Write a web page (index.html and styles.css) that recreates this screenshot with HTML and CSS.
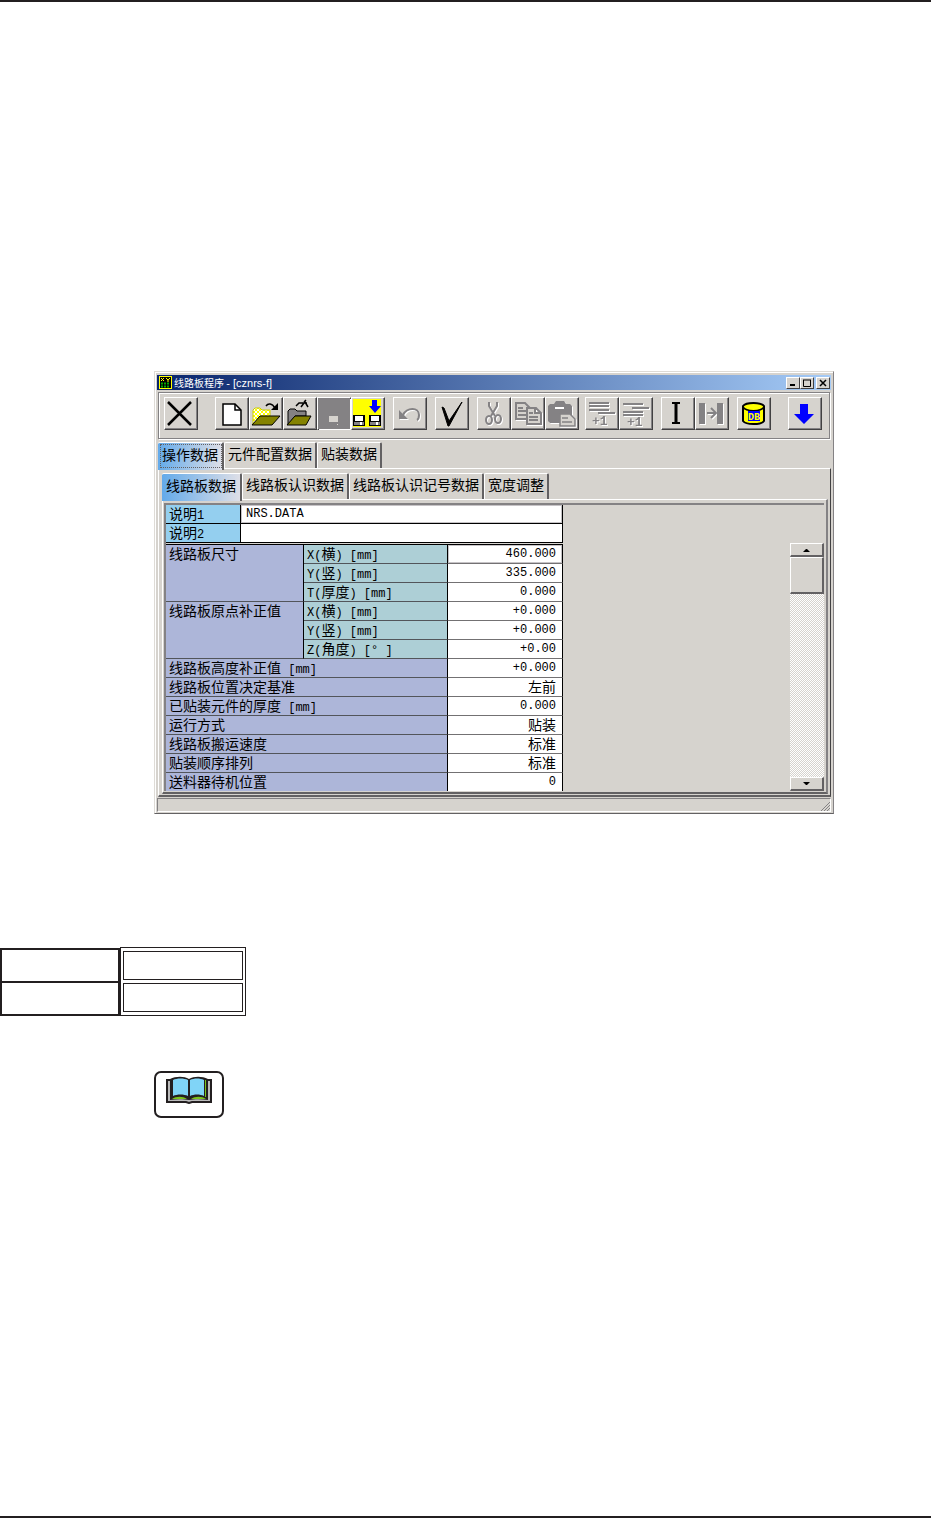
FILE: index.html
```html
<!DOCTYPE html>
<html lang="zh-CN">
<head>
    <meta charset="UTF-8">
    <meta name="viewport" content="width=device-width, initial-scale=1.0">
    <title>线路板程序</title>
    <link rel="stylesheet" href="styles.css">
</head>
<body>
    <main>
        <section class="window">
            <header class="titlebar">
                <svg class="app-icon" width="13" height="13" viewBox="0 0 13 13">
                    <rect width="13" height="13" fill="#ff0"/>
                    <rect x="1" y="1" width="11" height="11" fill="#000"/>
                    <path d="M2 2l3 3M5 2L2 5M7 2l2 2 2-2M9 4v2" stroke="#ff0" fill="none"/>
                    <path d="M2 7.500h9M2 10.500h9" stroke="#0a0" stroke-width="2" stroke-dasharray="2 1"/>
                </svg>
                <h1>线路板程序 <span>- [cznrs-f]</span></h1>
                <div class="window-buttons">
                    <button aria-label="最小化"><svg width="10" height="8"><path d="M2 6h5" stroke="#000" stroke-width="2"/></svg></button>
                    <button aria-label="最大化"><svg width="10" height="8"><path d="M1.500 1v6.500h7V1M1 1h8" stroke="#000" fill="none"/></svg></button>
                    <button class="close" aria-label="关闭"><svg width="10" height="8"><path d="M2 1l6 6M8 1L2 7" stroke="#000" stroke-width="1.500"/></svg></button>
                </div>
            </header>

            <div class="toolbar">
                <div class="group">
                    <button aria-label="退出"><svg viewBox="0 0 34 33"><path d="M4 5l23 23M27 5L4 28" stroke="#000" stroke-width="2.500"/></svg></button>
                </div>
                <div class="group wide">
                    <button aria-label="新建"><svg viewBox="0 0 34 33"><path d="M8 7h12l6 6v15H8z" fill="#fff" stroke="#000" stroke-width="1.500"/><path d="M20 7v6h6" fill="none" stroke="#000" stroke-width="1.500"/></svg></button>
                    <button aria-label="打开"><svg viewBox="0 0 34 33">
                        <defs><pattern id="dots" width="4" height="4" patternUnits="userSpaceOnUse"><rect width="4" height="4" fill="#ff0"/><path d="M0 0h2v2H0zM2 2h2v2H2z" fill="#fff"/></pattern></defs>
                        <path d="M4 28V13l2-2h5l2 2h8v6H11z" fill="url(#dots)" stroke="#cc0"/>
                        <path d="M3 28l8-9h20l-8 9z" fill="#848200" stroke="#000"/>
                        <path d="M17 9c2-3 6-3 9 2" fill="none" stroke="#000" stroke-width="1.500"/><path d="M29 6v7h-7z"/>
                    </svg></button>
                    <button aria-label="读取"><svg viewBox="0 0 34 33">
                        <path d="M5 28V14l2-2h5l2 2h9v5H12z" fill="#848284" stroke="#000"/>
                        <path d="M4 28l8-9h16l-5 9z" fill="#848200" stroke="#000"/>
                        <path d="M13 9l3-3h8M18 10l3-4M22 5l3 5M21 5l2-2" fill="none" stroke="#000" stroke-width="1.500"/>
                    </svg></button>
                    <button aria-label="保存" disabled class="filled"><svg viewBox="0 0 34 33"><path d="M0 0h32v31H0z" fill="#848284"/><path d="M11 18h9v6h-9zM19 26h1v1h-1z" fill="#d6d3ce"/></svg></button>
                    <button aria-label="另存为"><svg viewBox="0 0 34 33">
                        <path d="M2 2h28v28H2z" fill="#ff0"/>
                        <path d="M21 3h5v6h4l-6 7-6-7h3z" fill="#00f"/>
                        <path d="M2 18h12v11H2zM18 18h12v11H18z"/>
                        <path d="M4 19h8v5H4zM20 19h8v5h-8z" fill="#fff"/>
                        <path d="M3 25h10v3H3zM19 25h10v3H19z" fill="#848284"/>
                        <path d="M9 25h2v3H9zM25 25h2v3h-2z" fill="#fff"/>
                    </svg></button>
                </div>
                <div class="group">
                    <button aria-label="撤销" disabled><svg viewBox="0 0 34 33"><path d="M6 13v9h9z" fill="#848284"/><path d="M10 18c4-8 16-8 16 0 0 2 0 4-2 5" fill="none" stroke="#848284" stroke-width="2"/></svg></button>
                </div>
                <div class="group">
                    <button aria-label="检查"><svg viewBox="0 0 34 33"><path d="M7 10l2 1 5 13L27 5 14 29h-1z" stroke="#000"/></svg></button>
                </div>
                <div class="group">
                    <button aria-label="剪切" disabled><svg viewBox="0 0 34 33"><g fill="none" stroke="#848284" stroke-width="2"><path d="M12 5v4l6 10M20 5v4l-6 10"/><ellipse cx="12" cy="23" rx="3" ry="4"/><ellipse cx="21" cy="22" rx="3" ry="4"/></g></svg></button>
                    <button aria-label="复制" disabled><svg viewBox="0 0 34 33"><g fill="#d6d3ce" stroke="#848284" stroke-width="2"><path d="M5 6h9l5 5v11H5zM7 11h5M7 14h8M7 18h8"/><path d="M16 11h9l5 5v11H16zM24 11v5h5M18 16h4M18 20h9M18 23h9"/></g></svg></button>
                    <button aria-label="粘贴" disabled><svg viewBox="0 0 34 33"><path d="M3 9l2-2h4l2-3h8l2 3h4l2 2v17H5l-2-2z" fill="#848284"/><path d="M10 11h9" stroke="#fff" stroke-width="2"/><path d="M15 17h10l5 5v7H15zM17 21h6M17 25h10" fill="#d6d3ce" stroke="#848284" stroke-width="1.500"/></svg></button>
                </div>
                <div class="group tight">
                    <button aria-label="插入" disabled><svg viewBox="0 0 34 33"><path d="M4 6h20M4 9h20M4 13h20M13 16h17" stroke="#848284" stroke-width="2"/><text x="7" y="28">+1</text></svg></button>
                    <button aria-label="追加" disabled><svg viewBox="0 0 34 33"><path d="M4 7h20M13 11h17M4 15h20M4 18h20" stroke="#848284" stroke-width="2"/><text x="8" y="29">+1</text></svg></button>
                </div>
                <div class="group">
                    <button aria-label="光标"><svg viewBox="0 0 34 33"><path d="M11 6h8M11 26h8" stroke="#000" stroke-width="2"/><path d="M15 6v20" stroke="#000" stroke-width="3"/></svg></button>
                    <button aria-label="移动" disabled><svg viewBox="0 0 34 33"><path d="M4 6h6v21H4zM22 6h6v21h-6z" fill="#848284"/><path d="M12 16h9M16 11l5 5-5 5" fill="none" stroke="#848284" stroke-width="2"/></svg></button>
                </div>
                <div class="group">
                    <button aria-label="数据库"><svg viewBox="0 0 34 33"><path d="M6 9v15c3 4 18 4 21 0V9c-3-4-18-4-21 0z" fill="#ff0" stroke="#000" stroke-width="2"/><path d="M6 10c3 5 18 5 21 0" fill="none" stroke="#000" stroke-width="1.500"/><path d="M11 14h12v10H11z" fill="#00f"/><text class="db" x="11" y="23">DB</text></svg></button>
                </div>
                <div class="group wide">
                    <button aria-label="下载"><svg viewBox="0 0 34 33"><path d="M12 7h8v10h6L16 27 6 17h6z" fill="#00f"/></svg></button>
                </div>
            </div>

            <nav class="tabs">
                <button class="tab active focused">操作数据</button>
                <button class="tab">元件配置数据</button>
                <button class="tab">贴装数据</button>
            </nav>

            <div class="panel">
                <nav class="tabs">
                    <button class="tab active">线路板数据</button>
                    <button class="tab">线路板认识数据</button>
                    <button class="tab">线路板认识记号数据</button>
                    <button class="tab">宽度调整</button>
                </nav>

                <div class="panel inner">
                    <div class="grid">
                        <div class="tables">
                            <table class="notes">
                                <tr>
                                    <th><label for="note1">说明<span>1</span></label></th>
                                    <td><input type="text" id="note1" class="current" value="NRS.DATA"></td>
                                </tr>
                                <tr>
                                    <th><label for="note2">说明<span>2</span></label></th>
                                    <td><input type="text" id="note2"></td>
                                </tr>
                            </table>
                            <table class="params">
                                <tr><th rowspan="3" class="name">线路板尺寸</th><th class="axis"><label for="sizeX"><span>X(</span>横<span>) [mm]</span></label></th><td><input type="text" id="sizeX" class="current" value="460.000"></td></tr>
                                <tr><th class="axis"><span>Y(</span>竖<span>) [mm]</span></th><td>335.000</td></tr>
                                <tr><th class="axis"><span>T(</span>厚度<span>) [mm]</span></th><td>0.000</td></tr>
                                <tr><th rowspan="3" class="name">线路板原点补正值</th><th class="axis"><span>X(</span>横<span>) [mm]</span></th><td>+0.000</td></tr>
                                <tr><th class="axis"><span>Y(</span>竖<span>) [mm]</span></th><td>+0.000</td></tr>
                                <tr><th class="axis"><span>Z(</span>角度<span>) [° ]</span></th><td>+0.00</td></tr>
                                <tr><th colspan="2">线路板高度补正值<span> [mm]</span></th><td>+0.000</td></tr>
                                <tr><th colspan="2">线路板位置决定基准</th><td class="word">左前</td></tr>
                                <tr><th colspan="2">已贴装元件的厚度<span> [mm]</span></th><td>0.000</td></tr>
                                <tr><th colspan="2">运行方式</th><td class="word">贴装</td></tr>
                                <tr><th colspan="2">线路板搬运速度</th><td class="word">标准</td></tr>
                                <tr><th colspan="2">贴装顺序排列</th><td class="word">标准</td></tr>
                                <tr><th colspan="2">送料器待机位置</th><td>0</td></tr>
                            </table>
                        </div>
                        <div class="scrollbar">
                            <button aria-label="向上"><svg width="8" height="4"><path d="M0 4l3-3h1l3 3z"/></svg></button>
                            <div class="thumb"></div>
                            <div class="track"></div>
                            <button aria-label="向下"><svg width="8" height="4"><path d="M0 0l3 3h1l3-3z"/></svg></button>
                        </div>
                    </div>
                </div>
            </div>

            <footer class="statusbar">
                <svg width="9" height="9" viewBox="0 0 9 9"><path d="M0 9l9-9M3 9l6-6M6 9l3-3" stroke="#848284" fill="none"/></svg>
            </footer>
        </section>

        <div class="boxes">
            <table class="plain-box">
                <tr><td></td></tr>
                <tr><td></td></tr>
            </table>
            <table class="double-box">
                <tr><td></td></tr>
                <tr><td></td></tr>
            </table>
        </div>

        <div class="reference">
            <svg width="46" height="28" viewBox="0 0 46 28">
                <path d="M1 4h44v22H26l-3 1-3-1H1z" fill="#bbb" stroke="#231f20" stroke-width="2"/>
                <path d="M4 3c6-3 14-3 19 0 5-3 13-3 19 0v21c-6-1-14-1-19 0-5-1-13-1-19 0z" fill="#231f20"/>
                <path d="M6 23c4-3 11-3 15 0zM25 23c4-3 11-3 15 0zM39 4h1v17h-1z" fill="#7ac31c"/>
                <path d="M7 4c4-2 11-2 15 0v16c-4-2-11-2-15 0zM24 4c4-2 10-2 14 0v16c-4-2-10-2-14 0z" fill="#80d4f7"/>
            </svg>
        </div>
    </main>
</body>
</html>
```

FILE: styles.css
```css
* {
    box-sizing: border-box;
}
body {
    margin: 0;
    min-height: 100vh;
    background: #fff;
    border-top: 2px solid #231f20;
    border-bottom: 2px solid #231f20;
    color: #000;
    font-family: "Noto Sans CJK SC", sans-serif;
    font-size: 14px;
}
button {
    margin: 0;
    padding: 0;
    font: inherit;
    color: inherit;
    background: #d6d3ce;
    border: 0;
}
svg {
    display: block;
}

/* Window frame */
.window {
    margin: 369px 97px 0 154px;
    padding: 3px 2px 1px;
    background: #d6d3ce;
    border: 1px solid #dedbd6;
    border-right-color: #848284;
    border-bottom-color: #636163;
    box-shadow: inset 1px 1px 0 #fff;
}
.titlebar {
    display: flex;
    align-items: center;
    height: 15px;
    padding: 0 1px 0 2px;
    background: linear-gradient(to right, #08246b, #a5cbf7);
}
.titlebar h1 {
    flex: 1;
    margin: 0 0 0 2px;
    color: #fff;
    font-size: 10px;
    line-height: 15px;
    font-weight: normal;
}
.titlebar h1 span {
    font-family: "Liberation Sans", sans-serif;
    font-size: 11px;
}
.window-buttons {
    display: flex;
}
.window-buttons button {
    display: flex;
    align-items: center;
    justify-content: center;
    width: 14px;
    height: 12px;
    border: 1px solid;
    border-color: #fff #424142 #424142 #fff;
}
.window-buttons .close {
    margin-left: 2px;
}

/* Toolbar */
.toolbar {
    display: flex;
    margin: 2px 1px 0;
    padding: 4px 5px 8px;
    border: 1px solid #848284;
    box-shadow: inset 1px 1px 0 #fff, 1px 1px 0 #fff;
}
.group {
    display: flex;
    margin-left: 8px;
}
.group:first-child {
    margin-left: 0;
}
.group.wide {
    margin-left: 17px;
}
.group.tight {
    margin-left: 6px;
}
.group button {
    width: 34px;
    height: 33px;
    border: 1px solid;
    border-color: #fff #424142 #424142 #fff;
    box-shadow: inset -1px -1px 0 #848284;
}
.group svg {
    width: 34px;
    height: 33px;
    margin: -1px;
}
.group button:disabled svg {
    filter: drop-shadow(1px 1px 0 #fff);
}
.group .filled svg {
    margin: 0;
}
.group text {
    font: bold 13px "Liberation Mono", monospace;
    fill: #848284;
}
.group text.db {
    font: bold 10px "Liberation Mono", monospace;
    fill: #ff0;
}

/* Tabs */
.tabs {
    display: flex;
    height: 26px;
    margin: 3px 0 0 1px;
}
.tab {
    height: 26px;
    padding: 0 3px 5px;
    line-height: 20px;
    border: solid;
    border-width: 1px 2px 0 1px;
    border-color: #fff #636163 #fff #fff;
    border-radius: 2px 2px 0 0;
}
.tab.active {
    position: relative;
    height: 28px;
    padding: 0 4px 6px;
    border-left: 0;
    background: linear-gradient(to right, #63aaea, #dedfe7);
}
.tab.focused {
    outline: 1px dotted #636163;
    outline-offset: -3px;
}

/* Tab panels */
.panel {
    margin-left: 1px;
    padding: 4px 2px 1px;
    border: solid;
    border-width: 1px 1px 2px;
    border-color: #fff #424142 #636163 #fff;
}
.panel .tabs {
    margin-top: 0;
}
.panel.inner {
    padding: 3px 2px 1px 1px;
    border-right: 2px solid #848284;
}
.grid {
    display: flex;
    justify-content: space-between;
    border-top: 2px solid #848284;
    border-left: 2px solid #848284;
}

/* Data tables */
.tables table {
    border-collapse: separate;
    border-spacing: 0;
    table-layout: fixed;
    width: 397px;
}
.tables th,
.tables td {
    height: 19px;
    padding: 0 3px;
    line-height: 18px;
    font-weight: normal;
    text-align: left;
    vertical-align: top;
    white-space: nowrap;
    border-right: 1px solid #000;
    border-bottom: 1px solid #000;
}
.tables th,
.tables .word {
    line-height: 16px;
}
.tables th span,
.tables td,
.tables input {
    font-family: "Liberation Mono", monospace;
    font-size: 12px;
}
.tables span {
    line-height: 12px;
    white-space: pre;
}
.tables td {
    background: #fff;
}
.tables input {
    display: block;
    width: 100%;
    height: 18px;
    margin: 0;
    padding: 0 4px;
    color: #000;
    background: #fff;
    border: 1px solid #fff;
    outline: 0;
}
.tables input.current {
    border-color: #c6c3c6;
}
.notes th {
    width: 75px;
    background: #94cfef;
}
.notes td,
.params td:has(input) {
    padding: 0;
}
.params {
    margin-top: 1px;
    border-top: 1px solid #000;
}
.params th {
    background: #adb6d9;
    border-bottom-color: #52555a;
}
.params .name {
    width: 138px;
}
.params .axis {
    width: 144px;
    background: #adcfd6;
}
.params td {
    padding: 0 6px;
    text-align: right;
    border-bottom-color: #737173;
}
.params input {
    padding: 0 5px;
    text-align: right;
}
.params .word {
    font-family: "Noto Sans CJK SC", sans-serif;
    font-size: 14px;
}
.params tr:last-child > * {
    height: 18px;
    border-bottom: 0;
}

/* Scrollbar */
.scrollbar {
    display: flex;
    flex-direction: column;
    width: 34px;
    margin-top: 38px;
}
.scrollbar button,
.thumb {
    display: flex;
    align-items: center;
    justify-content: center;
    height: 14px;
    border: solid;
    border-width: 1px 2px 2px 1px;
    border-color: #fff #636163 #636163 #fff;
}
.scrollbar .thumb {
    height: 37px;
}
.track {
    flex: 1;
    background: repeating-conic-gradient(#d6d3ce 0 25%, #fff 0 50%) 0 0 / 2px 2px;
}

.statusbar {
    display: flex;
    justify-content: flex-end;
    align-items: flex-end;
    height: 14px;
    margin-top: 1px;
    border: 1px solid;
    border-color: #848284 #fff #fff #848284;
}

/* Empty boxes below the window */
.boxes {
    display: flex;
    align-items: center;
    margin-top: 133px;
}
.boxes td {
    padding: 0;
}
.plain-box {
    width: 120px;
    border-collapse: collapse;
}
.plain-box td {
    height: 33px;
    border: 2px solid #231f20;
}
.double-box {
    width: 126px;
    border: 1px solid #231f20;
    border-spacing: 2px 3px;
}
.double-box td {
    height: 29px;
    border: 1px solid #231f20;
}

.reference {
    display: flex;
    justify-content: center;
    width: 70px;
    height: 47px;
    margin: 55px 0 0 154px;
    padding-top: 3px;
    border: 2px solid #231f20;
    border-radius: 7px;
}
```
